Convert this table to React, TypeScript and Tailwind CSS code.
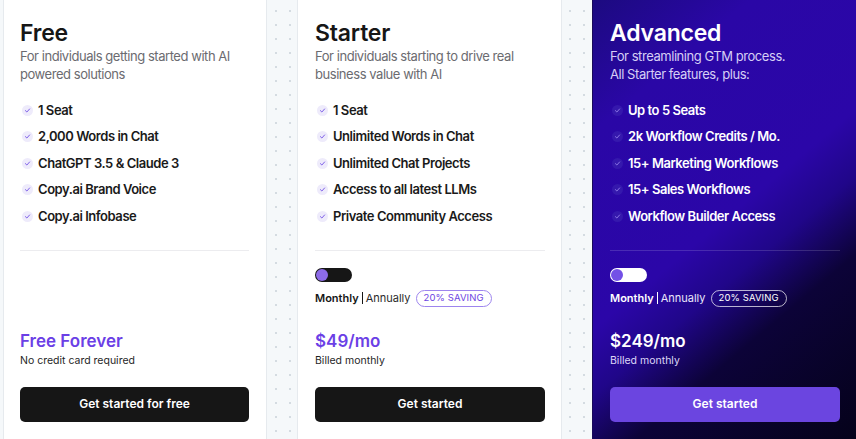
import React from "react";

type Variant = "light" | "dark";

function Check({ v }: { v: Variant }) {
  return (
    <span
      className={
        "ml-[2px] flex h-[11px] w-[11px] shrink-0 items-center justify-center rounded-full " +
        (v === "dark" ? "bg-[#3518ad]" : "bg-[#eeebfb]")
      }
    >
      <svg width="7" height="7" viewBox="0 0 10 10" fill="none">
        <path
          d="M2 5.2 L4.1 7.2 L8 2.8"
          stroke={v === "dark" ? "#8c78e6" : "#7a5ae6"}
          strokeWidth="1.4"
          strokeLinecap="round"
          strokeLinejoin="round"
        />
      </svg>
    </span>
  );
}

function Toggle({ v }: { v: Variant }) {
  return (
    <div
      className={
        "flex h-[14px] w-[37px] items-center rounded-full px-[1px] " +
        (v === "dark" ? "bg-white" : "bg-[#161616]")
      }
    >
      <span
        className={
          "h-[12px] w-[12px] rounded-full " + (v === "dark" ? "bg-[#7350e6]" : "bg-[#8d6be8]")
        }
      />
    </div>
  );
}

function Card({
  v,
  title,
  desc,
  features,
  price,
  sub,
  button,
  toggle,
  className,
}: {
  v: Variant;
  title: string;
  desc: string[];
  features: string[];
  price: string;
  sub: string;
  button: string;
  toggle: boolean;
  className: string;
}) {
  const dark = v === "dark";
  return (
    <div className={"flex flex-col pt-[19px] " + className}>
      <h2
        className={
          "text-[23px] leading-[28px] font-semibold tracking-[-0.2px] " +
          (dark ? "text-white" : "text-[#161616]")
        }
      >
        {title}
      </h2>
      <div
        className={
          "text-[13px] leading-[18px] tracking-[-0.45px] whitespace-nowrap " +
          (dark ? "text-[#d6cff5]" : "text-[#6b6b70]")
        }
      >
        {desc.map((d) => (
          <div key={d}>{d}</div>
        ))}
      </div>
      <ul className="mt-[14px] flex flex-col">
        {features.map((f) => (
          <li key={f} className="flex h-[26.5px] items-center gap-[5px]">
            <Check v={v} />
            <span
              className={
                "text-[13px] font-semibold tracking-[-0.45px] " +
                (dark ? "text-white" : "text-[#1a1a1a]")
              }
            >
              {f}
            </span>
          </li>
        ))}
      </ul>
      <div className={"mt-[20px] h-px " + (dark ? "bg-white/15" : "bg-[#ececef]")} />
      <div className={"mt-[17px] " + (toggle ? "" : "invisible")}>
        <Toggle v={v} />
        <div className="mt-[8px] flex h-[17px] items-center text-[11px]">
          <span className={"font-semibold " + (dark ? "text-white" : "text-[#161616]")}>
            Monthly
          </span>
          <span className={"mx-[3px] h-[12px] w-px " + (dark ? "bg-white" : "bg-[#161616]")} />
          <span className={dark ? "text-[#ebe7fb]" : "text-[#2a2a2a]"}>Annually</span>
          <span
            className={
              "ml-[5px] flex h-[17px] items-center rounded-full border px-[7px] text-[9.5px] tracking-[0.1px] " +
              (dark ? "border-white/70 text-white" : "border-[#9d85ee] text-[#6d45e3]")
            }
          >
            20% SAVING
          </span>
        </div>
      </div>
      <div
        className={
          "mt-[22px] text-[17px] leading-[24px] font-semibold " +
          (dark ? "text-white" : "text-[#6b3fe6]")
        }
      >
        {price}
      </div>
      <div
        className={
          "text-[10.5px] leading-[16px] " + (dark ? "text-[#ddd7f7]" : "text-[#1f1f1f]")
        }
      >
        {sub}
      </div>
      <button
        className={
          "mt-[18px] flex h-[35px] w-full items-center justify-center rounded-[5px] text-[12px] font-semibold text-white " +
          (dark ? "bg-[#6b45e0]" : "bg-[#161616]")
        }
      >
        {button}
      </button>
    </div>
  );
}

export default function App() {
  return (
    <div
      className="flex h-[439px] w-[856px] overflow-hidden bg-[#f5f8fa] bg-[radial-gradient(circle,#d4dbe1_0.9px,transparent_1.1px)] bg-[length:14px_14px] bg-[position:3px_4px] pl-[3px]"
      style={{ fontFamily: "Inter, 'Noto Sans', sans-serif" }}
    >
      <Card
        v="light"
        className="w-[264px] shrink-0 border-x border-[#e6eaee] bg-white pl-[16px] pr-[17px]"
        title="Free"
        desc={["For individuals getting started with AI", "powered solutions"]}
        features={[
          "1 Seat",
          "2,000 Words in Chat",
          "ChatGPT 3.5 & Claude 3",
          "Copy.ai Brand Voice",
          "Copy.ai Infobase",
        ]}
        toggle={false}
        price="Free Forever"
        sub="No credit card required"
        button="Get started for free"
      />
      <div className="w-[30px] shrink-0" />
      <Card
        v="light"
        className="w-[265px] shrink-0 border-x border-[#e6eaee] bg-white pl-[17px] pr-[16px]"
        title="Starter"
        desc={["For individuals starting to drive real", "business value with AI"]}
        features={[
          "1 Seat",
          "Unlimited Words in Chat",
          "Unlimited Chat Projects",
          "Access to all latest LLMs",
          "Private Community Access",
        ]}
        toggle={true}
        price="$49/mo"
        sub="Billed monthly"
        button="Get started"
      />
      <div className="w-[30px] shrink-0" />
      <Card
        v="dark"
        className="w-[264px] shrink-0 border-l border-[#1a0a5a] bg-[linear-gradient(140deg,#1c0a80_0%,#2a07a6_20%,#2b06a8_50%,#200689_60%,#0c0338_72%,#05021a_100%)] pl-[17px] pr-[16px]"
        title="Advanced"
        desc={["For streamlining GTM process.", "All Starter features, plus:"]}
        features={[
          "Up to 5 Seats",
          "2k Workflow Credits / Mo.",
          "15+ Marketing Workflows",
          "15+ Sales Workflows",
          "Workflow Builder Access",
        ]}
        toggle={true}
        price="$249/mo"
        sub="Billed monthly"
        button="Get started"
      />
    </div>
  );
}
